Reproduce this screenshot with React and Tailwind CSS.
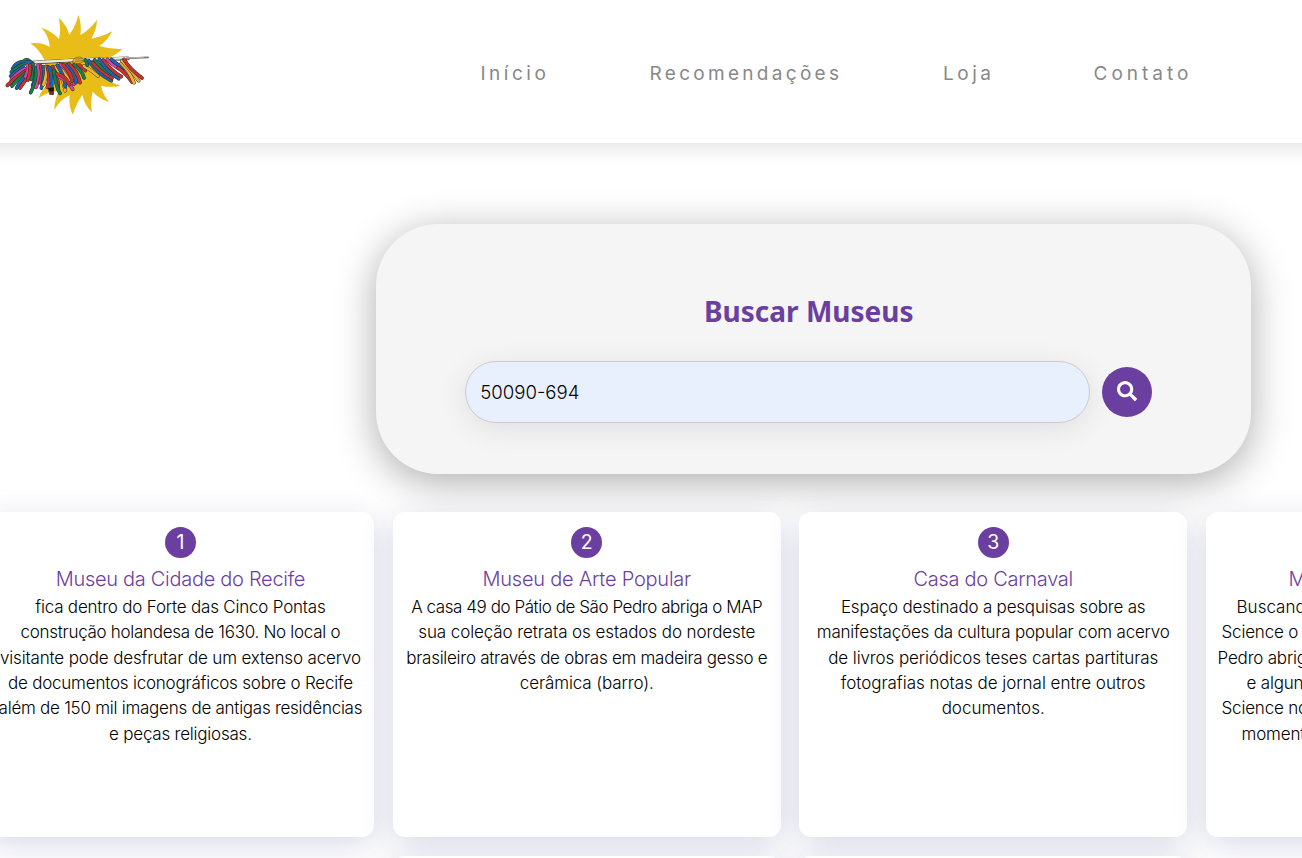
import { FaSearch } from "react-icons/fa";

const R = "#c8342b";
const B = "#1d64ad";
const G = "#12804a";
const P = "#d444a4";
const Y = "#ecb52c";

// Ribbons of the lance, back to front: [path, colour]
const RIBBONS = [
  ["M62 186 Q44 192 38 206", B],
  ["M66 194 Q46 204 34 216", G],
  ["M70 200 Q46 214 32 228", B],
  ["M74 206 Q44 222 34 240", P],
  ["M78 212 Q46 232 22 256", R],
  ["M84 214 Q54 236 36 258", G],
  ["M88 218 Q64 236 50 264", B],
  ["M94 216 Q74 244 60 264", R],
  ["M70 184 Q80 176 90 184", G],
  ["M76 190 Q84 180 98 190", B],
  ["M82 196 Q88 204 76 230", P],
  ["M90 196 Q92 214 84 240", R],
  ["M98 192 Q106 212 94 238", G],
  ["M102 200 Q110 230 98 256", B],
  ["M108 204 Q112 240 92 278", G],
  ["M114 196 Q122 232 108 262", P],
  ["M122 198 Q130 220 120 248", R],
  ["M130 200 Q136 232 124 264", B],
  ["M138 200 Q142 224 130 254", Y],
  ["M142 200 Q152 230 142 262", R],
  ["M148 202 Q158 236 154 268", B],
  ["M158 200 Q178 240 174 264", R],
  ["M162 210 Q166 256 180 280", G],
  ["M168 200 Q190 236 196 272", Y],
  ["M172 196 Q196 232 196 260", B],
  ["M176 230 Q206 242 218 268", P],
  ["M170 222 Q196 226 208 254", R],
  ["M182 194 Q206 214 222 252", P],
  ["M190 194 Q216 222 216 244", R],
  ["M200 194 Q230 220 228 248", B],
  ["M208 192 Q234 216 240 248", R],
  ["M222 194 Q248 214 252 234", G],
  ["M234 192 Q246 200 256 212", R],
  ["M252 198 Q276 212 294 228", Y],
  ["M256 180 Q262 188 262 196", G],
  ["M266 182 Q292 220 334 242", B],
  ["M278 188 Q302 214 336 234", R],
  ["M284 180 Q304 206 332 222", G],
  ["M298 178 Q324 216 356 236", B],
  ["M310 180 Q334 212 364 230", R],
  ["M322 178 Q346 206 384 214", P],
  ["M334 178 Q356 200 390 211", B],
  ["M354 204 Q378 220 396 246", R],
  ["M364 190 Q388 212 402 248", Y],
  ["M366 182 Q396 212 416 242", Y],
  ["M372 178 Q388 206 426 234", R],
];

function Logo() {
  return (
    <svg viewBox="0 0 480 390" className="h-[130px] w-[160px] shrink-0" aria-label="Logo">
      <path
        fill="#e9bd17"
        d="M91 130 Q126 126 149 141 Q147 106 124 83 Q158 93 177 118 Q184 86 176 53 Q200 74 208 104 Q228 77 235 44 Q246 74 241 105 Q271 88 291 59 Q290 88 274 116 Q308 110 336 94 Q325 120 298 138 Q334 149 367 147 Q346 168 318 175 L312 224 Q335 252 362 257 Q334 264 303 257 Q308 283 327 306 Q298 297 278 275 Q270 306 276 337 Q253 315 247 284 Q230 309 218 344 Q205 318 209 286 Q181 298 163 330 Q163 298 178 272 Q143 275 116 294 Q124 270 142 256 L132 178 Q118 148 91 130Z"
      />
      <g fill="none" strokeLinecap="round">
        <path d="M98 188 L240 180 L384 175" stroke="#46443c" strokeWidth="11" />
        <path d="M98 187 L240 179 L384 174" stroke="#e8e6da" strokeWidth="7" />
        <path d="M380 175 L444 172" stroke="#77776f" strokeWidth="5" />
        <path d="M382 174 L430 172" stroke="#d2d2ca" strokeWidth="2" />
        {RIBBONS.map(([d, color]) => (
          <g key={d}>
            <path d={d} stroke="#2b2430" strokeWidth="11" />
            <path d={d} stroke={color} strokeWidth="8.5" />
          </g>
        ))}
        <path d="M110 187 L218 181" stroke="#e8e6da" strokeWidth="6" />
        <path d="M218 186 Q218 172 238 171 Q252 172 250 184 Q236 196 218 186Z" fill="#e5b52c" stroke="#7b5b17" strokeWidth="2" />
        <path d="M228 177 L246 176 M226 184 L248 182" stroke="#7b5b17" strokeWidth="2" />
      </g>
      <path d="M144 264 L162 262 L162 274 L146 275Z" fill="#1b171c" />
      <path d="M148 275 L161 275 L160 284 L149 283Z" fill="#8d2b25" stroke="#1b171c" strokeWidth="2" />
    </svg>
  );
}

const MUSEUMS = [
  {
    title: ["Museu da Cidade do Recife", "tracking-[-0.29px]"],
    lines: [
      ["fica dentro do Forte das Cinco Pontas", "tracking-[-0.2px]"],
      ["construção holandesa de 1630. No local o", "tracking-[-0.29px]"],
      ["visitante pode desfrutar de um extenso acervo", "tracking-[-0.15px]"],
      ["de documentos iconográficos sobre o Recife", "tracking-[-0.21px]"],
      ["além de 150 mil imagens de antigas residências", "tracking-[-0.26px]"],
      ["e peças religiosas.", "tracking-[-0.22px]"],
    ],
  },
  {
    title: ["Museu de Arte Popular", "tracking-[-0.23px]"],
    lines: [
      ["A casa 49 do Pátio de São Pedro abriga o MAP", "tracking-[-0.44px]"],
      ["sua coleção retrata os estados do nordeste", "tracking-[-0.09px]"],
      ["brasileiro através de obras em madeira gesso e", "tracking-[-0.27px]"],
      ["cerâmica (barro).", "tracking-[-0.1px]"],
    ],
  },
  {
    title: ["Casa do Carnaval", "tracking-[-0.28px]"],
    lines: [
      ["Espaço destinado a pesquisas sobre as", "tracking-[-0.2px]"],
      ["manifestações da cultura popular com acervo", "tracking-[-0.2px]"],
      ["de livros periódicos teses cartas partituras", "tracking-[-0.1px]"],
      ["fotografias notas de jornal entre outros", "tracking-[-0.02px]"],
      ["documentos.", "tracking-[0px]"],
    ],
  },
  {
    title: ["Memorial Chico Science", "self-start pl-[83px] tracking-[-0.25px]"],
    lines: [
      ["Buscando", "self-start pl-[31px] tracking-[0px]"],
      ["Science o Memorial", "self-start pl-[16px] tracking-[-0.2px]"],
      ["Pedro abriga", "self-start pl-[12px] tracking-[-0.2px]"],
      ["e alguns", "self-start pl-[41px] tracking-[-0.2px]"],
      ["Science no", "self-start pl-[16px] tracking-[-0.2px]"],
      ["momento", "self-start pl-[36px] tracking-[-0.2px]"],
    ],
  },
];

const CARD =
  "flex h-[325px] w-[388px] shrink-0 flex-col items-center rounded-xl bg-white pt-[15px] shadow-[0_8px_32px_rgba(31,38,110,0.17)]";

function MuseumCard({ number, title, lines }) {
  return (
    <article className={CARD}>
      <span className="flex size-[31px] items-center justify-center rounded-full bg-[#6b3fa0] text-[19.5px] leading-none text-white">
        {number}
      </span>
      <h2 className={`mt-[6px] text-[20px] leading-[30px] font-light whitespace-nowrap text-[#6b3fa0] ${title[1]}`}>
        {title[0]}
      </h2>
      <div className="mt-px flex w-full flex-col items-center text-[17px] leading-[25.35px] font-light text-black">
        {lines.map(([text, style]) => (
          <span key={text} className={`whitespace-nowrap ${style}`}>
            {text}
          </span>
        ))}
      </div>
    </article>
  );
}

export default function App() {
  return (
    <div className="h-[858px] w-full overflow-hidden bg-white font-['Inter',sans-serif]">
      <header className="-mx-10 flex h-[143px] items-start bg-white px-10 shadow-[0_4px_20px_rgba(0,0,0,0.12)]">
        <Logo />
        <nav className="ml-[320.5px] flex h-[148px] items-center text-[19px] font-normal text-[#888] whitespace-nowrap">
          <a className="w-[169px] tracking-[3.5px]">Início</a>
          <a className="w-[293.5px] tracking-[3.3px]">Recomendações</a>
          <a className="w-[150.5px] tracking-[3.5px]">Loja</a>
          <a className="tracking-[4px]">Contato</a>
        </nav>
      </header>

      <section className="mt-[81px] ml-[376px] flex h-[250px] w-[875px] flex-col items-center rounded-[62px] bg-[#f5f5f5] pt-[67px] pr-[9.5px] shadow-[0_8px_40px_rgba(0,0,0,0.33)]">
        <h1 className="font-['Noto_Sans',sans-serif] text-[28px] leading-[40px] font-bold text-[#6b3fa0]">Buscar Museus</h1>
        <form className="mt-[30px] flex items-center gap-3" onSubmit={(e) => e.preventDefault()}>
          <input
            className="h-[62px] w-[625px] rounded-full border border-[#ccc] bg-[#e8f0fe] px-[14px] text-[18.6px] font-light text-black shadow-[0_6px_30px_rgba(0,0,0,0.09)] outline-none"
            defaultValue="50090-694"
          />
          <button className="flex size-[50px] items-center justify-center rounded-full bg-[#6b3fa0] pb-[2px] text-white" aria-label="Buscar">
            <FaSearch size={20} />
          </button>
        </form>
      </section>

      <div className="mt-[38px] -ml-[13.6px] flex gap-[18.4px]">
        {MUSEUMS.map((m, i) => (
          <MuseumCard key={m.title[0]} number={i + 1} {...m} />
        ))}
      </div>
      <div className="mt-[19px] ml-[392.8px] flex gap-[18.3px]">
        <div className={CARD} />
        <div className={CARD} />
      </div>
    </div>
  );
}
